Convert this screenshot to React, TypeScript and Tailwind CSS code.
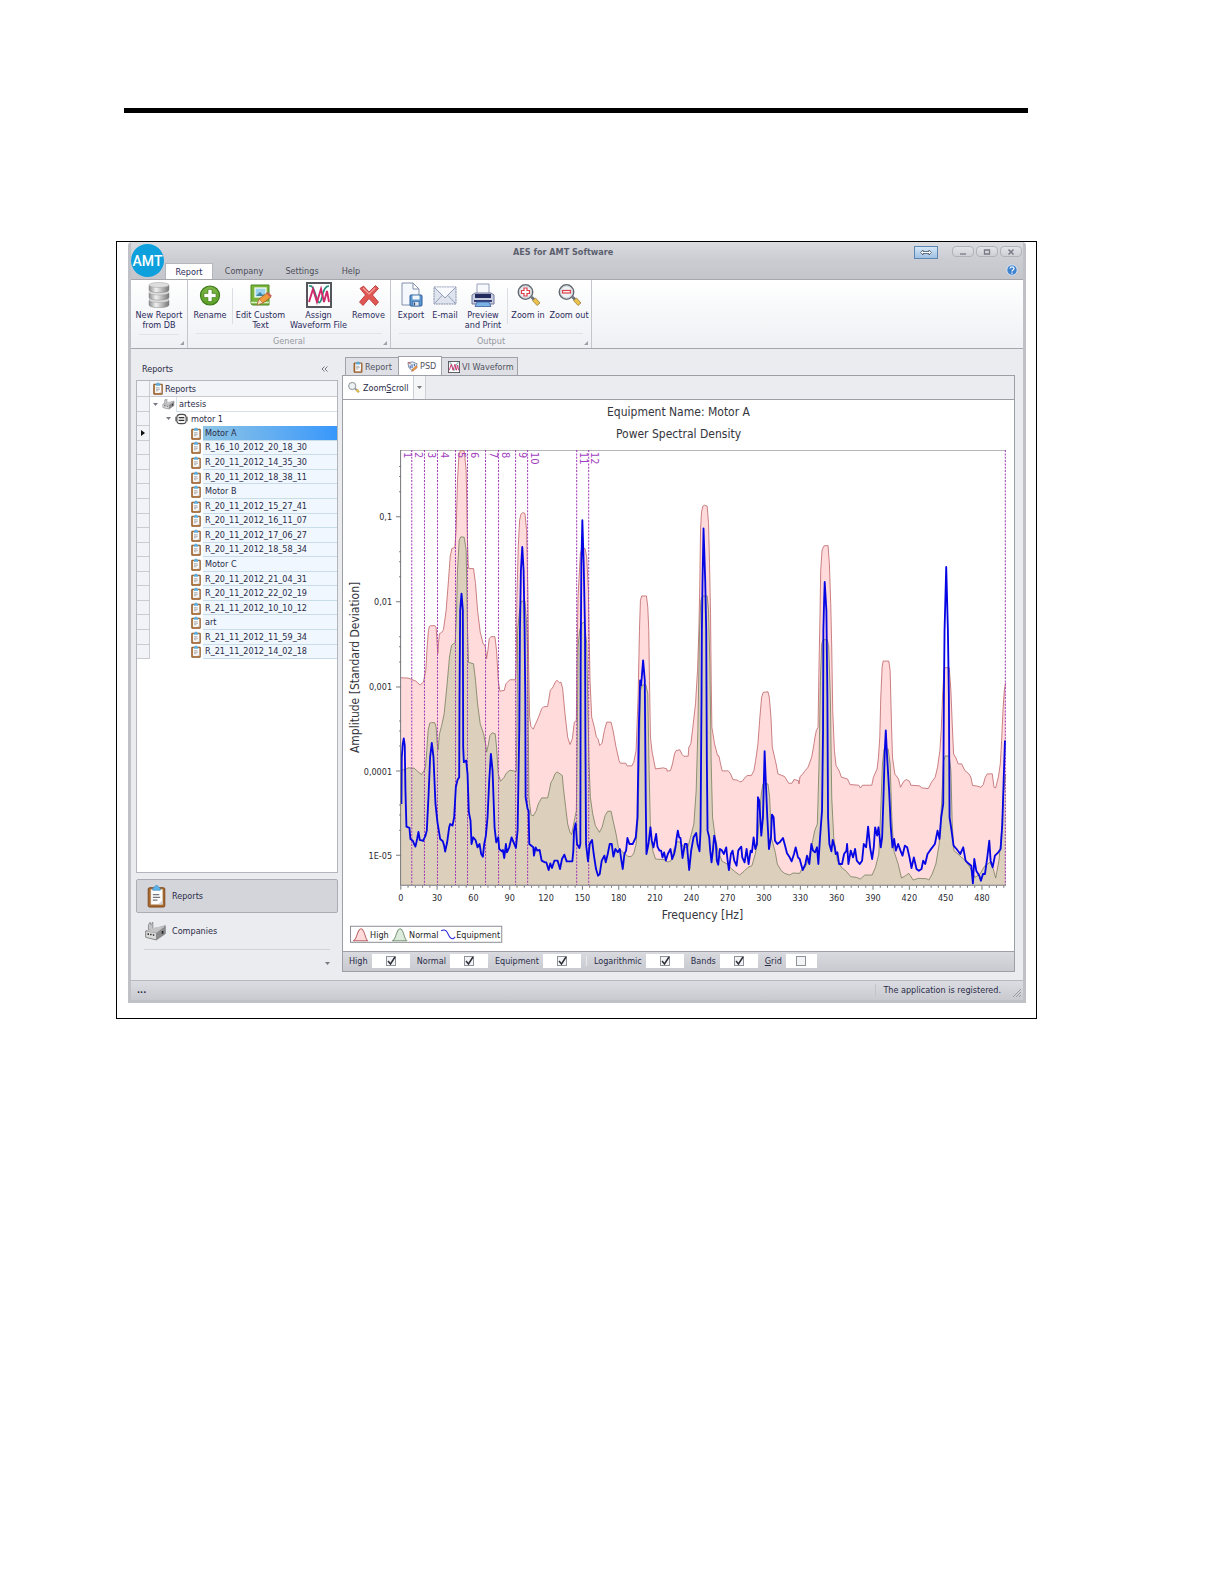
import { useState } from "react";
import type { ReactNode } from "react";
import clsx from "clsx";

interface IFIcon {
  className?: string;
}

const ClipboardIcon = ({ className }: IFIcon) => (
  <svg viewBox="0 0 20 26" className={className} aria-hidden="true">
    <rect x="1" y="4" width="18" height="21" rx="1.5" fill="#a8692f" stroke="#7c4718" />
    <rect x="4" y="6" width="12.5" height="16" fill="#fdfdfd" stroke="#d8cdbf" strokeWidth=".6" />
    <path d="M6 5.500c0-1.500 1-2 2-2.200C8.200 1 11.800 1 12 3.300c1 .2 2 .7 2 2.200v1.300H6z" fill="#5db3e6" stroke="#3a8dc4" strokeWidth=".7" />
    <path d="M6 11.500h7M6 14.500h8M6 17.500h5" stroke="#77797f" strokeWidth="1.200" />
    <path d="M12 22l4.500-4.500V22z" fill="#d3d3d6" />
  </svg>
);

const FactoryIcon = ({ className }: IFIcon) => (
  <svg viewBox="0 0 26 24" className={className} aria-hidden="true">
    <path d="M5 11V5l2-3 1 3 2-3v9z" fill="#c5c5c7" stroke="#7b7b7d" strokeWidth=".8" />
    <path d="M2 12l9-2 13-4v9l-10 7-12-3z" fill="#a7a7a9" stroke="#68686b" strokeWidth=".8" />
    <path d="M2 12l12 2v8L2 19z" fill="#dcdcdd" stroke="#7a7a7c" strokeWidth=".7" />
    <path d="M14 14l10-7v8l-10 7z" fill="#8a8a8d" />
    <path d="M2 12l10-4 12-2-10 8z" fill="#c4c4c6" />
    <path d="M4 15.500h1.500M7 16h1.500M10 16.500h1.500M21 12v3" stroke="#222" strokeWidth="1.800" />
  </svg>
);

const MotorIcon = ({ className }: IFIcon) => (
  <svg viewBox="0 0 14 12" className={className} aria-hidden="true">
    <path d="M1 3.500v5M13 3.500v5" stroke="#555" strokeWidth="1.200" />
    <rect x="2" y="1" width="10" height="10" rx="3.500" fill="#f4f4f4" stroke="#4a4a4a" strokeWidth="1.200" />
    <path d="M4 4.500h6M4 7.500h6" stroke="#333" strokeWidth="1.200" />
  </svg>
);

const DatabaseIcon = ({ className }: IFIcon) => (
  <svg viewBox="0 0 26 26" className={className} aria-hidden="true">
    <defs>
      <linearGradient id="drum">
        <stop offset="0" stopColor="#8d8d8d" />
        <stop offset=".35" stopColor="#f1f1f1" />
        <stop offset="1" stopColor="#777" />
      </linearGradient>
    </defs>
    {[17, 9.500, 2].map((y) => (
      <g key={y}>
        <path d={`M3 ${y + 1.500}v4.500c0 3.500 20 3.500 20 0v-4.500z`} fill="url(#drum)" stroke="#868686" strokeWidth=".5" />
        <ellipse cx="13" cy={y + 1} rx="10" ry="2.500" fill="#dedede" stroke="#aaa" strokeWidth=".6" />
      </g>
    ))}
  </svg>
);

const RenameIcon = ({ className }: IFIcon) => (
  <svg viewBox="0 0 26 26" className={className} aria-hidden="true">
    <defs>
      <linearGradient id="leaf" x2="0" y2="1">
        <stop offset="0" stopColor="#7fb548" />
        <stop offset="1" stopColor="#5ba026" />
      </linearGradient>
    </defs>
    <circle cx="13" cy="13.500" r="9.500" fill="url(#leaf)" stroke="#3c7a1a" strokeWidth="1.200" />
    <path d="M11 7.500h4v4h4v4h-4v4h-4v-4H7v-4h4z" fill="#fff" stroke="#3d7a1c" strokeWidth=".6" />
  </svg>
);

const EditIcon = ({ className }: IFIcon) => (
  <svg viewBox="0 0 26 26" className={className} aria-hidden="true">
    <path d="M3 3h18v20H5a2 2 0 0 1-2-2z" fill="#78b43c" stroke="#4c8a22" />
    <path d="M3 20.500h18" stroke="#d9ecc4" strokeWidth="1.500" />
    <rect x="7" y="6" width="11" height="9" fill="#9bd3ee" stroke="#f5f9f0" strokeWidth="1.300" />
    <path d="M8 14l4-4 3 3 1-1 1 2z" fill="#3f86a4" />
    <path d="M9 23l2-6 8-6 4 4-8 6z" fill="#ee9a3d" stroke="#a35e1d" strokeWidth=".8" />
    <path d="M18 11l2-1 4 4-2 1z" fill="#c95c55" />
    <path d="M9 23l2-6 4 4z" fill="#f3dcb5" stroke="#8d6a3c" strokeWidth=".5" />
  </svg>
);

const WaveformIcon = ({ className }: IFIcon) => (
  <svg viewBox="0 0 26 26" className={className} aria-hidden="true">
    <rect x="1" y="1" width="24" height="24" fill="#fff" stroke="#55565b" strokeWidth="2" />
    <path d="M3 4c4-1 5 4 7 10 2 8 4 9 6 1 2-9 4-11 7-11" fill="none" stroke="#27907f" strokeWidth="1.700" />
    <path d="M3 20L7 7l4 13 4-13 3 13 3-11 2 11" fill="none" stroke="#d0296b" strokeWidth="1.900" />
  </svg>
);

const RemoveIcon = ({ className }: IFIcon) => (
  <svg viewBox="0 0 26 26" className={className} aria-hidden="true">
    <path
      d="M4 6.500L7.500 4 13 10l6.500-6.500 3 3L16.500 13l6 7-3 3.500-6.500-7-6 7L3.500 20l6-7z"
      fill="#df5653"
      stroke="#b52e31"
      strokeWidth=".8"
    />
    <path d="M7 6l6 6 6-6" fill="none" stroke="#f3a19c" strokeWidth="1.200" />
  </svg>
);

const ExportIcon = ({ className }: IFIcon) => (
  <svg viewBox="0 0 26 26" className={className} aria-hidden="true">
    <path d="M4 1h11l6 6v16H4z" fill="#f4f7fc" stroke="#8390ab" />
    <path d="M15 1v6h6z" fill="#fff" stroke="#8390ab" />
    <rect x="12" y="13" width="12" height="11" rx="1" fill="#5d97cf" stroke="#2f5f9b" />
    <rect x="14.500" y="13.500" width="7" height="4" fill="#f2f6fa" />
    <rect x="15" y="19.500" width="6" height="4.500" fill="#dce4ec" stroke="#2f5f9b" strokeWidth=".6" />
    <path d="M16.500 20.500v3" stroke="#274b78" strokeWidth="1.200" />
  </svg>
);

const MailIcon = ({ className }: IFIcon) => (
  <svg viewBox="0 0 26 26" className={className} aria-hidden="true">
    <rect x="2" y="5" width="22" height="17" fill="#dfe4ef" stroke="#8590ab" strokeDasharray="2 .6" />
    <path d="M3 5.500h20L13 15z" fill="#f8fafd" />
    <path d="M2.500 5.500L13 16 23.500 5.500M2.500 21.500l7.500-8M23.500 21.500l-7.500-8" fill="none" stroke="#8b96b1" strokeWidth=".9" />
  </svg>
);

const PrinterIcon = ({ className }: IFIcon) => (
  <svg viewBox="0 0 26 26" className={className} aria-hidden="true">
    <path d="M7 2h12v10H7z" fill="#f6f8fc" stroke="#97a0b8" />
    <path d="M2 13l3-2h16l3 2v9H2z" fill="#c9cee0" stroke="#6e769a" />
    <path d="M5 12h16v4H5z" fill="#232a5e" />
    <path d="M4 18h18v2H4z" fill="#353e78" />
    <path d="M7 20h12l2 4.500H5z" fill="#7db2e6" stroke="#395f9f" strokeWidth=".8" />
  </svg>
);

const MagnifierIcon = ({ className, sign }: IFIcon & { sign?: "plus" | "minus" }) => (
  <svg viewBox="0 0 26 26" className={className} aria-hidden="true">
    <path d="M15.500 16l2-2 2.500 2.500-2 2z" fill="#6c6f76" />
    <path d="M17.500 18.500l3-2.500 4.500 5-3 2.500z" fill="#e9c14b" stroke="#8c7430" strokeWidth=".7" />
    <circle cx="10.500" cy="10" r="7.200" fill="#eef3f6" stroke="#63696f" strokeWidth="1.500" />
    <circle cx="10.500" cy="10" r="6" fill="none" stroke="#c9d0d6" />
    {sign === "plus" && (
      <path d="M9 6h3v2.500h2.500v3H12V14H9v-2.500H6.500v-3H9z" fill="#fff" stroke="#dc3f48" strokeWidth="1.200" />
    )}
    {sign === "minus" && (
      <rect x="6.500" y="8.500" width="8" height="2.500" fill="#fff" stroke="#dc3f48" strokeWidth="1.200" />
    )}
  </svg>
);

const SpectrumIcon = ({ className }: IFIcon) => (
  <svg viewBox="0 0 12 12" className={className} aria-hidden="true">
    <path d="M1 2l5-1 5 2-1 5-5 2-3-3z" fill="#e8edf5" stroke="#5c6a86" strokeWidth=".8" />
    <path d="M3.500 5v3M5.500 3.500v4M8 3v2.500" stroke="#3465a8" strokeWidth="1.100" />
    <path d="M5 11.500l1-2.500 4-4 1.500 1.500-4 4z" fill="#eea13e" stroke="#955" strokeWidth=".5" />
    <path d="M1 1.500l3 1.500" stroke="#cf4b4b" />
  </svg>
);

const HelpIcon = ({ className }: IFIcon) => (
  <svg viewBox="0 0 12 12" className={className} aria-hidden="true">
    <circle cx="6" cy="6" r="5.200" fill="#3f83cf" stroke="#d9e6f4" strokeWidth=".9" />
    <path d="M4 4.600C4 2.400 8 2.400 8 4.500 8 6 6 5.900 6 7.400M6 8.500v1.200" fill="none" stroke="#fff" strokeWidth="1.200" />
  </svg>
);

interface IFRibbonButton {
  label: string;
  width: string;
  icon: ReactNode;
}

const RibbonButton = ({ label, width, icon }: IFRibbonButton) => (
  <button type="button" className={clsx("flex flex-col items-center pt-[2px] text-[#2a2a5c]", width)}>
    {icon}
    <span className="mt-[2px] text-center leading-[10px] whitespace-pre">{label}</span>
  </button>
);

const RibbonSeparator = () => <div className="-mr-px mt-2 h-9 w-px bg-[#dcdee4]" />;

const RibbonGroup = ({ title, width, children }: { title?: string; width: string; children: ReactNode }) => (
  <div className={clsx("relative flex flex-col border-r border-[#c4c6cc]", width)}>
    <div className="flex h-[54px] items-start">{children}</div>
    <div className="mx-2 flex-1 border-t border-[#e2e3e8] text-center leading-[14px] text-[#96979e]">{title}</div>
    <svg viewBox="0 0 5 5" className="absolute right-[3px] bottom-[3px] size-[4px]" aria-hidden="true">
      <path d="M5 0v5H0z" fill="#9d9fa6" />
    </svg>
  </div>
);

const icon = "size-[26px]";

const Ribbon = () => (
  <div className="flex h-[70px] border-y border-[#a5a7ad] bg-linear-to-b from-white to-[#eef0f4]">
    <RibbonGroup width="w-[57px]">
      <RibbonButton label={"New Report\nfrom DB"} width="w-[56px]" icon={<DatabaseIcon className={icon} />} />
    </RibbonGroup>
    <RibbonGroup title="General" width="w-[203px]">
      <RibbonButton label="Rename" width="w-[44px]" icon={<RenameIcon className={icon} />} />
      <RibbonSeparator />
      <RibbonButton label={"Edit Custom\nText"} width="w-[57px]" icon={<EditIcon className={icon} />} />
      <RibbonButton label={"Assign\nWaveform File"} width="w-[59px]" icon={<WaveformIcon className={icon} />} />
      <RibbonButton label="Remove" width="w-[41px]" icon={<RemoveIcon className={icon} />} />
    </RibbonGroup>
    <RibbonGroup title="Output" width="w-[201px]">
      <RibbonButton label="Export" width="w-[40px]" icon={<ExportIcon className={icon} />} />
      <RibbonButton label="E-mail" width="w-[28px]" icon={<MailIcon className={icon} />} />
      <RibbonButton label={"Preview\nand Print"} width="w-[48px]" icon={<PrinterIcon className={icon} />} />
      <RibbonSeparator />
      <RibbonButton label="Zoom in" width="w-[42px]" icon={<MagnifierIcon sign="plus" className={icon} />} />
      <RibbonButton label="Zoom out" width="w-[40px]" icon={<MagnifierIcon sign="minus" className={icon} />} />
    </RibbonGroup>
  </div>
);

const captionButton =
  "grid h-[11px] w-[22px] place-items-center rounded-sm border border-[#b0b2b9] bg-linear-to-b from-[#e2e3e7] to-[#cfd0d6]";

const TitleBar = () => (
  <header className="flex h-[37px] bg-linear-to-b from-[#dadce0] via-[#cbccd2] to-[#c5c6cc]">
    <div className="relative z-10 mt-[2px] grid size-[33px] shrink-0 place-items-center rounded-full bg-[#0ea0dc] font-[Roboto,sans-serif] text-[14px] font-medium text-white">
      AMT
    </div>
    <nav className="mt-auto flex h-[16px] items-center pl-px text-[#4c4e58]">
      <a href="#report" className="grid h-full w-[48px] place-items-center border border-b-0 border-[#b4b6bc] bg-white text-[#2a2a5c]">
        Report
      </a>
      <a href="#company" className="w-[62px] text-center">Company</a>
      <a href="#settings" className="w-[54px] text-center">Settings</a>
      <a href="#help" className="w-[44px] text-center">Help</a>
    </nav>
    <h1 className="mt-[4px] mr-auto ml-[140px] text-[9px] leading-[12px] font-bold text-[#5b5f6e]">
      AES for AMT Software
    </h1>
    <div className="flex flex-col items-end pt-[4px] pr-px">
      <div className="flex items-start gap-[2px]">
        <button type="button" aria-label="Switch" className="mr-[12px] grid h-[13px] w-[24px] place-items-center border border-[#5c87b2] bg-linear-to-b from-[#d5e6f6] to-[#9fc1e2]">
          <svg viewBox="0 0 12 7" className="h-[7px] w-[12px]">
            <path d="M.5 3.500L3 1v1.500h6V1l2.500 2.500L9 6V4.500H3V6z" fill="#fff" stroke="#44546a" strokeWidth=".8" />
          </svg>
        </button>
        <button type="button" aria-label="Minimize" className={captionButton}>
          <svg viewBox="0 0 8 8" className="size-[8px]"><path d="M1 6h6" stroke="#777a84" strokeWidth="1.300" /></svg>
        </button>
        <button type="button" aria-label="Maximize" className={captionButton}>
          <svg viewBox="0 0 8 8" className="size-[8px]"><path d="M1.500 2h5v4h-5z" fill="none" stroke="#777a84" strokeWidth="1.300" /></svg>
        </button>
        <button type="button" aria-label="Close" className={captionButton}>
          <svg viewBox="0 0 8 8" className="size-[8px]"><path d="M1.500 1.500l5 5M6.500 1.500l-5 5" stroke="#777a84" strokeWidth="1.500" /></svg>
        </button>
      </div>
      <button type="button" aria-label="Help" className="mt-[5px] mr-[4px]">
        <HelpIcon className="size-[12px]" />
      </button>
    </div>
  </header>
);

const reports = [
  "Motor A",
  "R_16_10_2012_20_18_30",
  "R_20_11_2012_14_35_30",
  "R_20_11_2012_18_38_11",
  "Motor B",
  "R_20_11_2012_15_27_41",
  "R_20_11_2012_16_11_07",
  "R_20_11_2012_17_06_27",
  "R_20_11_2012_18_58_34",
  "Motor C",
  "R_20_11_2012_21_04_31",
  "R_20_11_2012_22_02_19",
  "R_21_11_2012_10_10_12",
  "art",
  "R_21_11_2012_11_59_34",
  "R_21_11_2012_14_02_18",
];

const RowHandle = ({ active }: { active?: boolean }) => (
  <span className="grid w-[13px] shrink-0 place-items-center self-stretch border-r border-b border-[#c9cbd1] bg-[#f2f3f6]">
    {active && (
      <svg viewBox="0 0 4 6" className="h-[6px] w-[4px]"><path d="M0 0l4 3-4 3z" fill="#111" /></svg>
    )}
  </span>
);

const Caret = () => (
  <svg viewBox="0 0 5 3" className="h-[3px] w-[5px]" aria-hidden="true"><path d="M0 0h5L2.500 3z" fill="#777a82" /></svg>
);

const Sidebar = () => {
  const [selected, setSelected] = useState(0);
  return (
    <aside className="flex w-[202px] shrink-0 flex-col">
      <div className="flex h-[31px] items-center justify-between pr-[10px] pl-[6px] pt-[8px]">
        <h2>Reports</h2>
        <button type="button" aria-label="Collapse">
          <svg viewBox="0 0 7 6" className="h-[6px] w-[7px]">
            <path d="M3.500 .5L1 3l2.500 2.500M6.500 .5L4 3l2.500 2.500" fill="none" stroke="#666975" strokeWidth=".9" />
          </svg>
        </button>
      </div>
      <div className="flex-1 border border-[#b3b6bd] bg-white">
        <div className="flex h-[16px] items-center border-b border-[#c9cbd1] bg-[#f3f4f7]">
          <span className="w-[13px] self-stretch border-r border-[#c9cbd1]" />
          <ClipboardIcon className="mr-[2px] ml-[3px] h-[13px] w-[10px]" />
          Reports
        </div>
        <ul className="flex h-[262px] flex-col">
          <li className="flex flex-1 items-center">
            <RowHandle />
            <span className="ml-[3px]"><Caret /></span>
            <FactoryIcon className="mr-px ml-[4px] h-[12px] w-[13px]" />
            <span className="flex flex-1 items-center self-stretch border-b border-l border-[#d5e0ea] pl-[2px]">artesis</span>
          </li>
          <li className="flex flex-1 items-center">
            <RowHandle />
            <span className="ml-[16px]"><Caret /></span>
            <MotorIcon className="mr-px ml-[4px] h-[12px] w-[13px]" />
            <span className="flex flex-1 items-center self-stretch pl-[2px]">motor 1</span>
          </li>
          {reports.map((name, i) => (
            <li key={name} className="flex flex-1 items-center">
              <RowHandle active={i === selected} />
              <ClipboardIcon className="mr-[2px] ml-[41px] h-[13px] w-[10px]" />
              <button
                type="button"
                onClick={() => setSelected(i)}
                className={clsx(
                  "flex flex-1 items-center self-stretch border-b border-[#c9dcea] pl-[2px] text-left",
                  i === selected ? "bg-linear-to-r from-[#8cc4e4] to-[#3797fb]" : "bg-[#f0f7fe]",
                )}
              >
                {name}
              </button>
            </li>
          ))}
        </ul>
      </div>
      <button type="button" className="mt-[6px] flex h-[34px] items-center rounded-xs border border-[#abadb4] bg-[#d4d5db] pl-[10px]">
        <ClipboardIcon className="mr-[6px] h-[24px] w-[19px]" />
        Reports
      </button>
      <button type="button" className="flex h-[36px] items-center pl-[8px]">
        <FactoryIcon className="mr-[5px] h-[22px] w-[23px]" />
        Companies
      </button>
      <div className="mx-2 flex h-[31px] justify-end border-t border-[#d0d2d7] pt-[12px]">
        <Caret />
      </div>
    </aside>
  );
};

// Curves are plotted on a fine grid, three units to a pixel.
const high =
  "200,142 222,143 233,147 245,152 258,164 268,155 275,120 279,50 283,0 286,-12 290,-14 302,-14 306,-8 309,40 311,70 313,40 316,10 322,7 328,-2 336,-60 343,-150 348,-220 353,-245 362,-248 366,-300 370,-450 374,-520 378,-538 390,-538 396,-480 399,-300 402,-200 404,-185 418,-185 424,-140 430,-60 438,5 446,38 453,48 457,85 461,60 465,25 470,19 482,19 487,60 492,150 497,182 510,180 515,160 527,148 544,148 546,100 548,-100 552,-250 556,-330 560,-348 566,-353 572,-350 577,-300 581,-100 583,100 586,260 590,288 597,296 604,280 612,262 622,235 628,229 640,228 648,180 656,170 664,153 668,150 676,157 680,155 685,175 692,250 700,320 707,342 714,325 720,275 726,270 728,100 731,-100 738,-230 742,-243 752,-245 757,-220 762,-120 764,0 767,150 772,260 780,290 786,320 791,325 796,345 803,338 810,300 817,275 830,275 836,300 845,350 854,390 858,398 874,398 878,406 892,406 898,395 905,360 911,200 915,0 918,-90 922,-103 936,-103 940,-70 943,0 945,150 948,320 953,365 958,390 963,415 987,412 997,415 998,422 1008,420 1014,400 1020,370 1025,360 1036,358 1043,372 1048,377 1061,377 1063,350 1069,340 1075,290 1083,220 1089,120 1093,0 1096,-150 1098,-300 1101,-355 1105,-372 1110,-375 1118,-372 1122,-320 1125,-200 1128,-50 1130,150 1132,290 1140,340 1149,375 1153,376 1158,400 1163,421 1181,421 1188,430 1195,447 1210,449 1215,454 1223,452 1232,440 1238,435 1250,435 1258,420 1263,390 1266,370 1270,340 1275,270 1281,200 1286,186 1300,184 1304,200 1309,260 1313,350 1322,390 1324,398 1330,430 1350,438 1362,458 1372,458 1378,447 1391,450 1393,460 1396,438 1403,432 1410,422 1420,410 1431,380 1438,340 1441,320 1445,300 1450,290 1453,100 1456,-50 1458,-180 1462,-240 1468,-253 1480,-254 1484,-200 1488,-80 1491,50 1494,240 1499,360 1504,405 1513,420 1520,440 1538,445 1546,462 1572,464 1577,472 1583,464 1611,464 1616,440 1627,415 1631,380 1635,320 1638,200 1642,110 1645,92 1662,92 1666,120 1670,280 1673,380 1680,430 1691,445 1697,470 1707,452 1715,447 1724,452 1728,464 1755,466 1760,472 1780,474 1790,455 1801,440 1808,410 1815,360 1819,300 1823,200 1827,120 1830,112 1843,112 1848,180 1852,280 1856,370 1863,382 1870,400 1880,400 1890,420 1902,430 1908,440 1913,465 1925,466 1938,470 1945,462 1951,440 1957,430 1972,430 1977,470 1982,472 1990,440 1996,400 2000,330 2004,240 2008,180 2012,158";
const normal =
  "200,420 215,416 222,412 240,413 250,422 262,432 270,420 274,410 278,360 282,300 287,278 292,276 302,277 306,290 309,340 312,358 316,310 322,288 330,250 338,170 346,80 352,45 358,40 363,38 367,-50 370,-180 375,-270 380,-280 390,-279 396,-240 400,0 403,96 418,100 424,150 430,220 438,280 448,310 455,345 457,365 462,345 467,315 474,307 483,310 487,350 492,430 499,452 510,440 516,428 527,419 546,423 548,300 550,0 556,-60 561,-87 572,-88 577,-20 580,60 584,500 590,552 597,556 606,540 612,520 622,502 640,502 645,480 650,455 655,448 662,430 668,424 677,430 684,435 687,470 694,530 700,580 707,605 712,612 718,580 726,540 729,300 731,50 736,0 742,-20 750,-25 757,40 760,200 764,400 768,500 775,550 783,585 795,605 803,590 812,555 820,542 830,542 836,570 845,610 852,650 862,662 870,668 880,677 890,678 898,668 905,640 911,560 915,350 918,180 924,164 934,163 940,190 944,420 948,600 955,660 963,685 990,687 1000,694 1010,690 1020,650 1028,633 1038,635 1048,650 1060,650 1068,620 1078,580 1085,480 1090,300 1095,0 1099,-90 1104,-103 1118,-103 1122,-60 1126,100 1130,400 1134,560 1142,620 1150,660 1163,692 1178,700 1188,712 1200,722 1215,733 1228,722 1240,710 1252,705 1262,670 1268,640 1274,560 1280,490 1285,460 1300,460 1305,500 1310,620 1322,665 1328,700 1340,720 1350,728 1365,733 1375,727 1395,728 1400,718 1410,712 1420,690 1432,640 1440,600 1448,580 1453,400 1457,150 1461,40 1466,28 1478,28 1482,50 1487,200 1491,500 1497,620 1508,690 1520,710 1535,722 1548,738 1565,740 1577,745 1590,733 1612,733 1622,710 1632,670 1637,560 1643,400 1648,355 1660,355 1666,400 1671,560 1677,660 1690,700 1700,742 1712,735 1722,728 1735,748 1750,743 1775,744 1782,748 1792,730 1803,700 1813,640 1820,520 1826,390 1832,376 1843,377 1848,420 1852,580 1857,660 1867,668 1880,680 1892,690 1905,710 1920,740 1935,730 1950,705 1965,695 1975,715 1982,742 1992,690 2000,600 2006,480 2012,430";
const equipment =
  "202,520 203,380 206,340 209,324 212,345 214,480 217,588 226,592 229,625 236,630 240,640 244,648 249,625 253,604 257,628 267,631 274,615 278,600 283,500 288,380 293,337 298,380 304,520 310,575 318,625 326,632 330,645 333,663 339,635 345,590 348,580 355,585 360,560 365,470 370,448 375,440 376,200 378,-60 382,-110 386,-60 387,350 389,395 396,390 400,430 404,545 409,570 412,640 417,620 424,628 430,650 436,640 441,670 446,678 450,640 455,615 460,560 465,450 470,370 475,420 481,590 486,635 492,620 495,655 503,662 506,658 510,682 515,640 518,665 525,650 532,620 538,635 545,652 550,600 555,300 557,0 560,-180 564,-250 568,-180 571,0 573,200 574,500 580,535 583,540 585,640 597,650 599,675 604,650 609,660 616,658 622,690 632,695 636,695 643,718 648,698 653,712 660,690 670,690 677,715 683,685 690,672 697,692 714,692 717,660 719,600 724,578 728,640 735,652 738,640 739,100 741,-200 744,-330 748,-200 752,0 753,300 755,640 761,692 766,640 773,628 778,670 785,715 791,735 796,730 802,690 810,675 814,695 820,670 826,640 832,640 837,678 843,655 850,665 856,655 861,690 865,715 870,670 875,660 879,622 885,640 895,640 904,620 909,560 913,300 917,150 920,165 922,140 926,90 931,150 934,520 936,670 942,640 948,590 952,630 957,650 960,635 965,610 969,648 975,660 980,660 984,680 989,665 994,690 1000,670 1008,655 1013,685 1019,670 1023,650 1026,625 1030,600 1034,620 1038,622 1044,682 1051,640 1057,640 1064,718 1070,660 1077,620 1085,607 1089,640 1095,662 1098,600 1101,200 1102,0 1104,-150 1107,-305 1112,-150 1115,0 1117,400 1119,600 1124,620 1127,660 1131,695 1135,660 1139,615 1144,640 1147,690 1151,702 1156,655 1161,658 1168,670 1175,650 1178,680 1183,718 1189,670 1194,660 1199,690 1206,705 1211,660 1214,655 1220,648 1223,680 1230,695 1236,655 1242,700 1248,660 1252,665 1257,620 1262,655 1267,640 1270,500 1274,510 1280,615 1285,560 1288,440 1290,362 1293,440 1298,560 1303,655 1309,620 1312,552 1317,560 1321,630 1328,640 1335,635 1345,622 1350,640 1357,668 1365,680 1371,692 1378,670 1383,650 1390,680 1395,685 1404,718 1412,700 1417,675 1424,700 1430,640 1435,660 1441,665 1447,650 1451,700 1456,620 1462,540 1465,300 1466,0 1468,-80 1470,-145 1475,-60 1478,200 1480,560 1484,640 1490,662 1494,628 1500,650 1503,670 1508,665 1513,700 1522,700 1528,670 1535,660 1537,640 1541,700 1548,660 1555,680 1561,655 1566,690 1575,700 1582,690 1587,640 1594,650 1600,588 1606,650 1612,685 1617,650 1621,590 1627,615 1631,590 1638,650 1642,620 1646,500 1650,360 1653,300 1657,380 1663,480 1668,590 1673,650 1678,625 1683,660 1690,640 1697,660 1703,675 1710,645 1717,650 1724,680 1730,712 1737,680 1745,715 1752,720 1760,715 1765,690 1771,700 1778,670 1785,660 1800,640 1808,600 1814,625 1819,560 1825,520 1827,200 1829,0 1834,-190 1839,0 1842,200 1844,560 1850,600 1856,645 1865,655 1876,670 1885,650 1892,690 1900,698 1909,705 1914,758 1918,685 1924,720 1933,735 1938,750 1944,730 1950,730 1957,680 1963,630 1967,690 1973,710 1980,675 1990,665 1997,655 2002,580 2007,420 2010,330";

const bandLines = [233, 271, 310, 364, 400, 454, 493, 544, 580, 727, 763, 2011];
const bandLabels = [220, 253, 291, 330, 382, 419, 476, 513, 565, 600, 748, 781];
const yTicks: [string, number][] = [
  ["0,1", 116],
  ["0,01", 201],
  ["0,001", 286],
  ["0,0001", 370],
  ["1E-05", 454],
];

interface IFLayers {
  high: boolean;
  normal: boolean;
  equipment: boolean;
  bands: boolean;
  grid: boolean;
}

const SpectrumChart = ({ layers }: { layers: IFLayers }) => {
  const freqX = (hz: number) => 57.700 + hz * 1.209;
  return (
    <svg viewBox="0 0 670 550" className="block w-full bg-white" role="img" aria-label="Power Spectral Density">
      <g fill="#34353d" fontSize="12" textAnchor="middle">
        <text x="335" y="16">Equipment Name: Motor A</text>
        <text x="335" y="38">Power Spectral Density</text>
        <text x="359" y="518">Frequency [Hz]</text>
        <text transform="translate(16 267) rotate(-90)">Amplitude [Standard Deviation]</text>
      </g>
      <path d="M57.500 50.500H661.500" stroke="#b5b5ba" fill="none" />
      <g transform="translate(-9 230) scale(.33333)" strokeLinejoin="round">
        {layers.high && (
          <>
            <polygon points={`200,763 ${high} 2012,763`} fill="#ffdbdb" />
            <polyline points={high} fill="none" stroke="#bd6468" strokeWidth="2.400" />
          </>
        )}
        {layers.normal && (
          <>
            <polygon points={`200,763 ${normal} 2012,763`} fill="#dccfbb" />
            <polyline points={normal} fill="none" stroke="#767f5e" strokeWidth="2.400" />
          </>
        )}
        {layers.bands &&
          bandLines.map((x) => (
            <path key={x} d={`M${x} -540V763`} stroke="#a035b4" strokeWidth="3" strokeDasharray="6 4" />
          ))}
        {layers.equipment && <polyline points={equipment} fill="none" stroke="#0606e4" strokeWidth="5.500" />}
      </g>
      {layers.bands && (
        <g fill="#a23fc0" fontSize="11">
          {bandLabels.map((x, i) => (
            <text key={x} transform={`translate(${Math.round(x / 3) - 12} 52) rotate(90)`}>{i + 1}</text>
          ))}
        </g>
      )}
      {layers.grid &&
        yTicks.map(([label, y]) => <path key={label} d={`M58 ${y}.500H661`} stroke="#d0d0d4" />)}
      <path d="M57.500 50V484.500H662" fill="none" stroke="#77787d" />
      <g fill="#2b2c33" fontSize="9">
        {yTicks.map(([label, y]) => (
          <g key={label}>
            <path d={`M53 ${y}.500h5M56 ${y - 25}.500h2M56 ${y - 40}.500h2M56 ${y - 50}.500h2`} stroke="#77787d" />
            <text x="49" y={y + 4} textAnchor="end">{label}</text>
          </g>
        ))}
        {Array.from({ length: 84 }, (_, i) => i * 6).map((hz) => (
          <path key={hz} d={`M${freqX(hz)} 485v${hz % 30 === 0 ? 4 : 2}`} stroke="#77787d" />
        ))}
        {Array.from({ length: 17 }, (_, i) => i * 30).map((hz) => (
          <text key={hz} x={freqX(hz)} y="500" textAnchor="middle">{hz}</text>
        ))}
      </g>
      <g fill="#1d1e26" fontSize="9">
        <rect x="7.500" y="525.500" width="151" height="16" fill="#fff" stroke="#8d8e94" />
        <path d="M10 540c4 0 4-12 8-12s4 12 7 12z" fill="#ffdbdb" stroke="#bd6468" />
        <text x="27" y="537">High</text>
        <path d="M49 540c4 0 4-12 8-12s4 12 7 12z" fill="#dcebdc" stroke="#7d987a" />
        <text x="66" y="537">Normal</text>
        <path d="M98 530c8-4 6 9 12 8l2-2" fill="none" stroke="#2222dd" />
        <text x="113" y="537">Equipment</text>
      </g>
    </svg>
  );
};

interface IFToggle {
  id: string;
  label: ReactNode;
  checked: boolean;
  narrow?: boolean;
  onChange: (checked: boolean) => void;
}

const Toggle = ({ id, label, checked, narrow, onChange }: IFToggle) => (
  <div className="flex items-center">
    <label htmlFor={id} className="px-[4px]">{label}</label>
    <span className={clsx("grid h-[14px] place-items-center bg-white", narrow ? "w-[31px]" : "w-[38px]")}>
      <input
        id={id}
        type="checkbox"
        checked={checked}
        onChange={(e) => onChange(e.target.checked)}
        className="col-start-1 row-start-1 size-[10px] appearance-none border border-[#8f929a] bg-[#f3f4f6]"
      />
      {checked && (
        <svg viewBox="0 0 10 10" className="pointer-events-none col-start-1 row-start-1 size-[10px]">
          <path d="M2 5l2.500 3L9 1" fill="none" stroke="#2d2e35" strokeWidth="1.500" />
        </svg>
      )}
    </span>
  </div>
);

const viewTab = "flex items-center gap-[2px] border border-b-0 border-[#9fa2a9]";

export default function App() {
  const [layers, setLayers] = useState<IFLayers>({
    high: true,
    normal: true,
    equipment: true,
    bands: true,
    grid: false,
  });
  const [logarithmic, setLogarithmic] = useState(true);
  const set = (key: keyof IFLayers) => (checked: boolean) => setLayers({ ...layers, [key]: checked });

  return (
    <main className="min-h-screen bg-white pt-[108px] font-['DejaVu_Sans_Condensed','DejaVu_Sans',sans-serif] text-[9px] leading-[12px] text-[#2a2b48]">
      <div className="mr-[196px] ml-[124px] h-[5px] bg-black" />
      <div className="mt-[128px] mr-[187px] ml-[116px] border border-black pr-[10px] pb-[15px] pl-[11px]">
        <div className="rounded-t-sm border-x-[3px] border-b-[3px] border-[#bfc1c6] bg-[#ebecef]">
          <TitleBar />
          <Ribbon />
          <div className="flex pr-[8px] pl-[5px]">
            <Sidebar />
            <section className="ml-[4px] min-w-0 flex-1 pt-[6px] pb-[8px]">
              <div className="flex h-[20px] items-end pl-[3px] text-[#50525e]">
                <a href="#view-report" className={clsx(viewTab, "h-[18px] w-[53px] border-r-0 bg-[#dfe0e5] pl-[7px]")}>
                  <ClipboardIcon className="h-[12px] w-[10px]" />
                  Report
                </a>
                <a href="#view-psd" className={clsx(viewTab, "h-[19px] w-[44px] bg-white pl-[8px]")}>
                  <SpectrumIcon className="size-[11px]" />
                  PSD
                </a>
                <a href="#view-waveform" className={clsx(viewTab, "h-[18px] w-[76px] border-l-0 bg-[#dfe0e5] pl-[6px]")}>
                  <WaveformIcon className="size-[12px]" />
                  <span className="whitespace-nowrap">VI Waveform</span>
                </a>
              </div>
              <div className="border border-[#9c9fa6]">
                <div className="flex h-[24px] border-b border-[#9c9fa6]">
                  <button type="button" className="flex w-[70px] items-center bg-white pl-[4px]">
                    <MagnifierIcon className="mr-[3px] size-[13px]" />
                    <span>Zoom<u>S</u>croll</span>
                  </button>
                  <button type="button" aria-label="Zoom options" className="grid w-[13px] place-items-center border-x border-[#cdcfd5] bg-[#f5f6f8]">
                    <Caret />
                  </button>
                </div>
                <SpectrumChart layers={layers} />
                <div className="flex h-[20px] items-center gap-[3px] border-t border-[#9c9fa6] bg-linear-to-b from-[#d9dadf] to-[#c9cad0] pl-[2px]">
                  <Toggle id="high" label="High" checked={layers.high} onChange={set("high")} />
                  <Toggle id="normal" label="Normal" checked={layers.normal} onChange={set("normal")} />
                  <Toggle id="equipment" label="Equipment" checked={layers.equipment} onChange={set("equipment")} />
                  <div className="ml-[2px] h-[10px] w-px bg-[#e8e9ec]" />
                  <Toggle id="logarithmic" label="Logarithmic" checked={logarithmic} onChange={setLogarithmic} />
                  <Toggle id="bands" label="Bands" checked={layers.bands} onChange={set("bands")} />
                  <Toggle id="grid" label={<><u>G</u>rid</>} checked={layers.grid} narrow onChange={set("grid")} />
                </div>
              </div>
            </section>
          </div>
          <footer className="flex h-[20px] items-center justify-between border-t border-[#b6b8be] bg-linear-to-b from-[#dcdde2] to-[#c9cad0] pr-[2px] pl-[6px]">
            <span className="font-bold">...</span>
            <div className="flex items-center gap-[12px]">
              <span className="border-l border-[#c2c4ca] pl-[7px]">The application is registered.</span>
              <svg viewBox="0 0 8 8" className="mt-[6px] size-[8px]" aria-hidden="true">
                <path d="M0 8l8-8M3 8l5-5M6 8l2-2" stroke="#9a9ca3" />
              </svg>
            </div>
          </footer>
        </div>
      </div>
    </main>
  );
}
